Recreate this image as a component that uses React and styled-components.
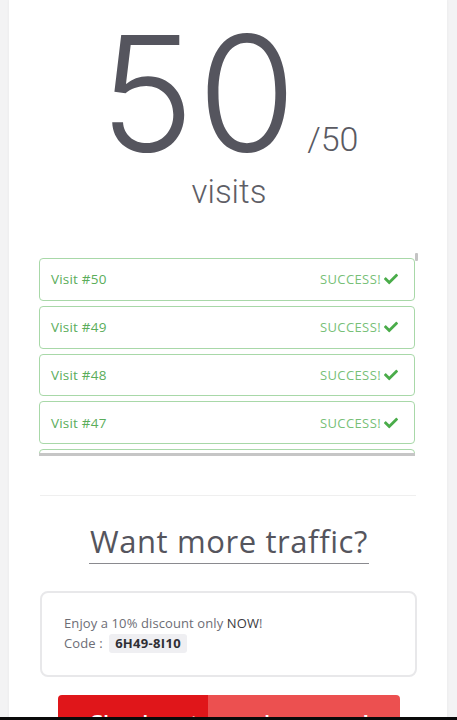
import React from "react";
import styled, { createGlobalStyle } from "styled-components";
import { FaCheck } from "react-icons/fa";

const Global = createGlobalStyle`
  html, body { margin: 0; padding: 0; height: 720px; overflow: hidden; }
  body { background: #f3f3f4; font-family: "Open Sans", "Noto Sans", sans-serif; }
  * { box-sizing: border-box; }
`;

const Card = styled.main`
  margin: 0 10px 0 9px;
  min-height: 720px;
  background: #ffffff;
  box-shadow: 0 0 3px rgba(0, 0, 0, 0.05);
  padding: 0 28px 0 30px;
  display: flex;
  flex-direction: column;
`;

const Counter = styled.section`
  display: flex;
  flex-direction: column;
  align-items: center;
  color: #55555e;
  font-family: Roboto, "Liberation Sans", sans-serif;
  font-weight: 300;
`;

const HeroRow = styled.div`
  margin-top: 11px;
  height: 166px;
  display: flex;
  align-items: baseline;
`;

const Big = styled.span`
  font-family: Inter, Roboto, sans-serif;
  font-size: 160px;
  line-height: 165px;
  letter-spacing: 3px;
  margin-right: -3px;
  font-weight: 300;
`;

const Total = styled.span`
  font-size: 34px;
  margin-left: 11px;
  color: #5a5a62;
`;

const Unit = styled.div`
  margin-top: -2px;
  font-size: 33px;
  line-height: 33px;
  color: #5e5e66;
`;

const ListWrap = styled.div`
  position: relative;
  margin-top: 45px;
  width: 380px;
  display: flex;
  flex-direction: column;
`;

const Scroll = styled.div`
  height: 200px;
  overflow-y: scroll;
  display: flex;
  flex-direction: column;
  gap: 5px;
  padding: 5px 4px 0 0;
  scrollbar-width: none;
  &::-webkit-scrollbar { display: none; }
`;

const Thumb = styled.div`
  position: absolute;
  top: 0;
  right: 1px;
  width: 3px;
  height: 8px;
  border-radius: 1px;
  background: #c4c4c4;
`;

const Row = styled.div`
  flex: 0 0 42.75px;
  border: 1px solid #a8d8a8;
  border-radius: 4px;
  display: flex;
  align-items: center;
  justify-content: space-between;
  padding: 0 16px 0 11px;
  font-size: 13.5px;
  letter-spacing: 0.2px;
  color: #5aad5a;
`;

const Status = styled.span`
  display: flex;
  align-items: center;
  gap: 3px;
  color: #78bf78;
  font-size: 13px;
  letter-spacing: 0.4px;
  svg { color: #4aac4a; }
`;

const ListEdge = styled.div`
  width: 376px;
  height: 3px;
  background: #c6c6c6;
`;

const Divider = styled.hr`
  margin: 39px 3px 0 1px;
  border: 0;
  height: 1px;
  background: #efefef;
`;

const HeadingWrap = styled.div`
  margin-top: 25px;
  display: flex;
  justify-content: center;
`;

const Heading = styled.h2`
  margin: 0;
  font-size: 31px;
  line-height: 40px;
  font-weight: 500;
  letter-spacing: 0.6px;
  color: #55555d;
  padding: 0 1px 2px;
  border-bottom: 1px solid #8a8a8f;
`;

const Promo = styled.div`
  margin: 27px 2px 0 1px;
  border: 2px solid #e8e8ea;
  border-radius: 8px;
  padding: 20px 22px 22px;
  font-size: 13px;
  letter-spacing: 0.1px;
  line-height: 20px;
  color: #6d6d75;
`;

const Strong = styled.span`
  color: #3a3a40;
  font-weight: 500;
`;

const CodeChip = styled.span`
  display: inline-block;
  margin-left: 3px;
  padding: 0 6px;
  background: #efeff2;
  border-radius: 3px;
  color: #2f2f35;
  font-weight: 700;
  letter-spacing: 0.3px;
  line-height: 19px;
`;

const Button = styled.button`
  margin: 18px 19px 0;
  height: 52px;
  border: 0;
  border-radius: 4px;
  background: linear-gradient(90deg, #e0161a 0 44%, #ec5050 44% 100%);
  color: #fff;
  font-family: "Open Sans", sans-serif;
  font-size: 22px;
  line-height: 24px;
  letter-spacing: 0.5px;
  font-weight: 600;
  padding-top: 15px;
  display: flex;
  justify-content: center;
  align-items: flex-start;
`;

const BottomBar = styled.div`
  position: fixed;
  left: 0;
  right: 0;
  bottom: 0;
  height: 3px;
  background: #0a0a0a;
`;

const visits = Array.from({ length: 50 }, (_, i) => 50 - i);

export default function App() {
  return (
    <>
      <Global />
      <Card>
        <Counter>
          <HeroRow>
            <Big>50</Big>
            <Total>/50</Total>
          </HeroRow>
          <Unit>visits</Unit>
        </Counter>
        <ListWrap>
          <Scroll>
            {visits.map((n) => (
              <Row key={n}>
                <span>Visit #{n}</span>
                <Status>
                  SUCCESS! <FaCheck size={14} />
                </Status>
              </Row>
            ))}
          </Scroll>
          <Thumb />
          <ListEdge />
        </ListWrap>
        <Divider />
        <HeadingWrap>
          <Heading>Want more traffic?</Heading>
        </HeadingWrap>
        <Promo>
          <div>
            Enjoy a 10% discount only <Strong>NOW</Strong>!
          </div>
          <div>
            Code : <CodeChip>6H49-8I10</CodeChip>
          </div>
        </Promo>
        <Button>Check out our plans now!</Button>
      </Card>
      <BottomBar />
    </>
  );
}
